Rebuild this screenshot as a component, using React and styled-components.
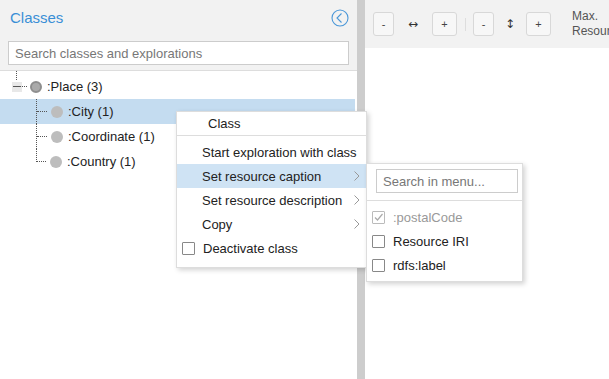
import React from 'react';
import styled, { createGlobalStyle, css } from 'styled-components';

const GlobalStyle = createGlobalStyle`
  html, body {
    margin: 0;
    padding: 0;
    height: 100%;
    background: #fff;
  }
  body {
    font-family: "Liberation Sans", Arial, sans-serif;
    font-size: 13px;
    color: #333;
  }
  #root {
    height: 100%;
  }
`;

const Page = styled.div`
  display: flex;
  height: 100vh;
  position: relative;
  overflow: hidden;
`;

const LeftPanel = styled.div`
  display: flex;
  flex-direction: column;
  width: 357px;
  flex-shrink: 0;
`;

const PanelHeader = styled.div`
  background: #f2f2f2;
  border-bottom: 1px solid #ddd;
  height: 71px;
  box-sizing: border-box;
  padding: 8px 8px 0 8px;
`;

const TitleRow = styled.div`
  display: flex;
  align-items: center;
  justify-content: space-between;
  height: 19px;
  margin-bottom: 14px;
`;

const Title = styled.h2`
  margin: 0 0 0 2px;
  font-size: 15px;
  font-weight: normal;
  color: #3a8fd6;
`;

const CollapseButton = styled.svg`
  width: 18px;
  height: 18px;
`;

const SearchInput = styled.input`
  box-sizing: border-box;
  width: 341px;
  height: 24px;
  border: 1px solid #ccc;
  padding: 0 6px;
  font-family: inherit;
  font-size: 13px;
  color: #333;
  outline: none;
  &::placeholder {
    color: #777;
  }
`;

const Tree = styled.div`
  flex: 1;
  background: #fff;
  padding-top: 3px;
  position: relative;
`;

const RootLine = styled.div`
  position: absolute;
  left: 16px;
  top: 0;
  height: 9px;
  border-left: 1px dotted #555;
`;

const Row = styled.div`
  display: flex;
  align-items: center;
  height: 25px;
  width: 355px;
  background: ${p => (p.selected ? '#c4dcf0' : 'transparent')};
  padding-left: ${p => p.indent}px;
  box-sizing: border-box;
  color: #222;
`;

const Expander = styled.span`
  display: inline-block;
  width: 10px;
  height: 10px;
  background: #e8e8e8;
  position: relative;
  &::after {
    content: '';
    position: absolute;
    left: 1px;
    right: 1px;
    top: 4px;
    border-top: 1px solid #555;
  }
`;

const Dash = styled.span`
  display: inline-block;
  width: ${p => p.width}px;
  border-top: 1px dotted #555;
`;

const Connector = styled.span`
  align-self: stretch;
  width: 10px;
  position: relative;
  border-left: 1px dotted #555;
  ${p => p.last && css`
    border-left: none;
    &::before {
      content: '';
      position: absolute;
      left: 0;
      top: 0;
      height: 13px;
      border-left: 1px dotted #555;
    }
  `}
  &::after {
    content: '';
    position: absolute;
    left: 0;
    right: 0;
    top: 12px;
    border-top: 1px dotted #555;
  }
`;

const Dot = styled.span`
  display: inline-block;
  width: 12px;
  height: 12px;
  border-radius: 50%;
  box-sizing: border-box;
  margin: 0 5px 0 ${p => (p.root ? 3 : 4)}px;
  ${p => p.root
    ? css`
      background: #aaa;
      border: 2px solid #8e8e8e;
    `
    : css`
      background: #bdbdbd;
    `}
`;

const Splitter = styled.div`
  width: 8px;
  flex-shrink: 0;
  background: #cdcdcd;
`;

const RightPanel = styled.div`
  flex: 1;
  display: flex;
  flex-direction: column;
  background: #fff;
`;

const Toolbar = styled.div`
  height: 48px;
  background: #f2f2f2;
  display: flex;
  align-items: center;
  padding-left: 8px;
  white-space: nowrap;
`;

const ToolButton = styled.button`
  box-sizing: border-box;
  width: ${p => p.w}px;
  height: 24px;
  border: 1px solid #d8d8d8;
  border-radius: 3px;
  background: #f7f7f7;
  font-family: inherit;
  font-size: 11px;
  color: #444;
  padding: 0;
  margin: 0;
`;

const ToolIcon = styled.span`
  width: ${p => p.w}px;
  text-align: center;
  font-family: "DejaVu Sans", sans-serif;
  font-size: 12px;
  color: #333;
`;

const ToolSep = styled.span`
  width: 1px;
  height: 13px;
  background: #ddd;
  margin: 0 7px 0 8px;
`;

const ToolLabel = styled.span`
  margin-left: 21px;
  font-size: 12px;
  line-height: 15px;
  color: #555;
  white-space: normal;
  width: 40px;
`;

const Menu = styled.div`
  position: absolute;
  left: ${p => p.x}px;
  top: ${p => p.y}px;
  width: ${p => p.w}px;
  box-sizing: border-box;
  background: #fff;
  border: 1px solid #ddd;
  box-shadow: 2px 2px 5px rgba(0, 0, 0, 0.18);
  padding-bottom: ${p => p.pb}px;
  color: #222;
`;

const MenuHeader = styled.div`
  height: 23px;
  line-height: 23px;
  padding-left: 31px;
  border-bottom: 1px solid #ddd;
  margin-bottom: 4px;
`;

const MenuItem = styled.div`
  display: flex;
  align-items: center;
  height: 24px;
  padding-left: ${p => (p.check ? 5 : 25)}px;
  padding-right: 6px;
  background: ${p => (p.active ? '#cfe3f4' : 'transparent')};
  color: ${p => (p.disabled ? '#999' : '#222')};
`;

const ItemText = styled.span`
  flex: 1;
`;

const Chevron = styled.svg`
  width: 6px;
  height: 10px;
`;

const Box = styled.span`
  box-sizing: border-box;
  width: 13px;
  height: 13px;
  border: 1px solid ${p => (p.disabled ? '#bbb' : '#888')};
  border-radius: 1px;
  margin-right: 8px;
  display: inline-flex;
  align-items: center;
  justify-content: center;
  background: #fff;
`;

const SubSearch = styled.input`
  box-sizing: border-box;
  display: block;
  margin: 5px 0 0 9px;
  width: 142px;
  height: 24px;
  border: 1px solid #ccc;
  padding: 0 6px;
  font-family: inherit;
  font-size: 13px;
  outline: none;
  &::placeholder {
    color: #777;
  }
`;

const SubSep = styled.div`
  border-top: 1px solid #ddd;
  margin: 7px 0 4px;
`;

const Arrow = () => (
  <Chevron viewBox="0 0 6 10">
    <path d="M0.5 0.5 L5 5 L0.5 9.5" fill="none" stroke="#999" strokeWidth="1" />
  </Chevron>
);

const CheckBox = ({ checked, disabled }) => (
  <Box disabled={disabled}>
    {checked && (
      <svg width="11" height="11" viewBox="0 0 11 11">
        <path d="M2 5.5 L4.5 8 L9.5 2" fill="none" stroke="#aaa" strokeWidth="1.2" />
      </svg>
    )}
  </Box>
);

const children = [
  { label: ':City (1)', selected: true },
  { label: ':Coordinate (1)' },
  { label: ':Country (1)', last: true },
];

const App = () => (
  <Page>
    <GlobalStyle />
    <LeftPanel>
      <PanelHeader>
        <TitleRow>
          <Title>Classes</Title>
          <CollapseButton viewBox="0 0 18 18">
            <circle cx="9" cy="9" r="8" fill="none" stroke="#4a97d8" strokeWidth="1.1" />
            <path d="M10.5 4.5 L6 9 L10.5 13.5" fill="none" stroke="#4a97d8" strokeWidth="1.1" />
          </CollapseButton>
        </TitleRow>
        <SearchInput placeholder="Search classes and explorations" />
      </PanelHeader>
      <Tree>
        <RootLine />
        <Row indent={12}>
          <Expander />
          <Dash width={5} />
          <Dot root />
          :Place (3)
        </Row>
        {children.map(c => (
          <Row key={c.label} indent={36} selected={c.selected}>
            <Connector last={c.last} />
            <Dot />
            {c.label}
          </Row>
        ))}
      </Tree>
    </LeftPanel>
    <Splitter />
    <RightPanel>
      <Toolbar>
        <ToolButton w={21}>-</ToolButton>
        <ToolIcon w={38}>↔</ToolIcon>
        <ToolButton w={25}>+</ToolButton>
        <ToolSep />
        <ToolButton w={21}>-</ToolButton>
        <ToolIcon w={32}>↕</ToolIcon>
        <ToolButton w={25}>+</ToolButton>
        <ToolLabel>Max. Resources</ToolLabel>
      </Toolbar>
    </RightPanel>

    <Menu x={176} y={111} w={191} pb={7}>
      <MenuHeader>Class</MenuHeader>
      <MenuItem>
        <ItemText>Start exploration with class</ItemText>
      </MenuItem>
      <MenuItem active>
        <ItemText>Set resource caption</ItemText>
        <Arrow />
      </MenuItem>
      <MenuItem>
        <ItemText>Set resource description</ItemText>
        <Arrow />
      </MenuItem>
      <MenuItem>
        <ItemText>Copy</ItemText>
        <Arrow />
      </MenuItem>
      <MenuItem check>
        <CheckBox />
        <ItemText>Deactivate class</ItemText>
      </MenuItem>
    </Menu>

    <Menu x={366} y={163} w={157} pb={4}>
      <SubSearch placeholder="Search in menu..." />
      <SubSep />
      <MenuItem check disabled>
        <CheckBox checked disabled />
        <ItemText>:postalCode</ItemText>
      </MenuItem>
      <MenuItem check>
        <CheckBox />
        <ItemText>Resource IRI</ItemText>
      </MenuItem>
      <MenuItem check>
        <CheckBox />
        <ItemText>rdfs:label</ItemText>
      </MenuItem>
    </Menu>
  </Page>
);

export default App;
